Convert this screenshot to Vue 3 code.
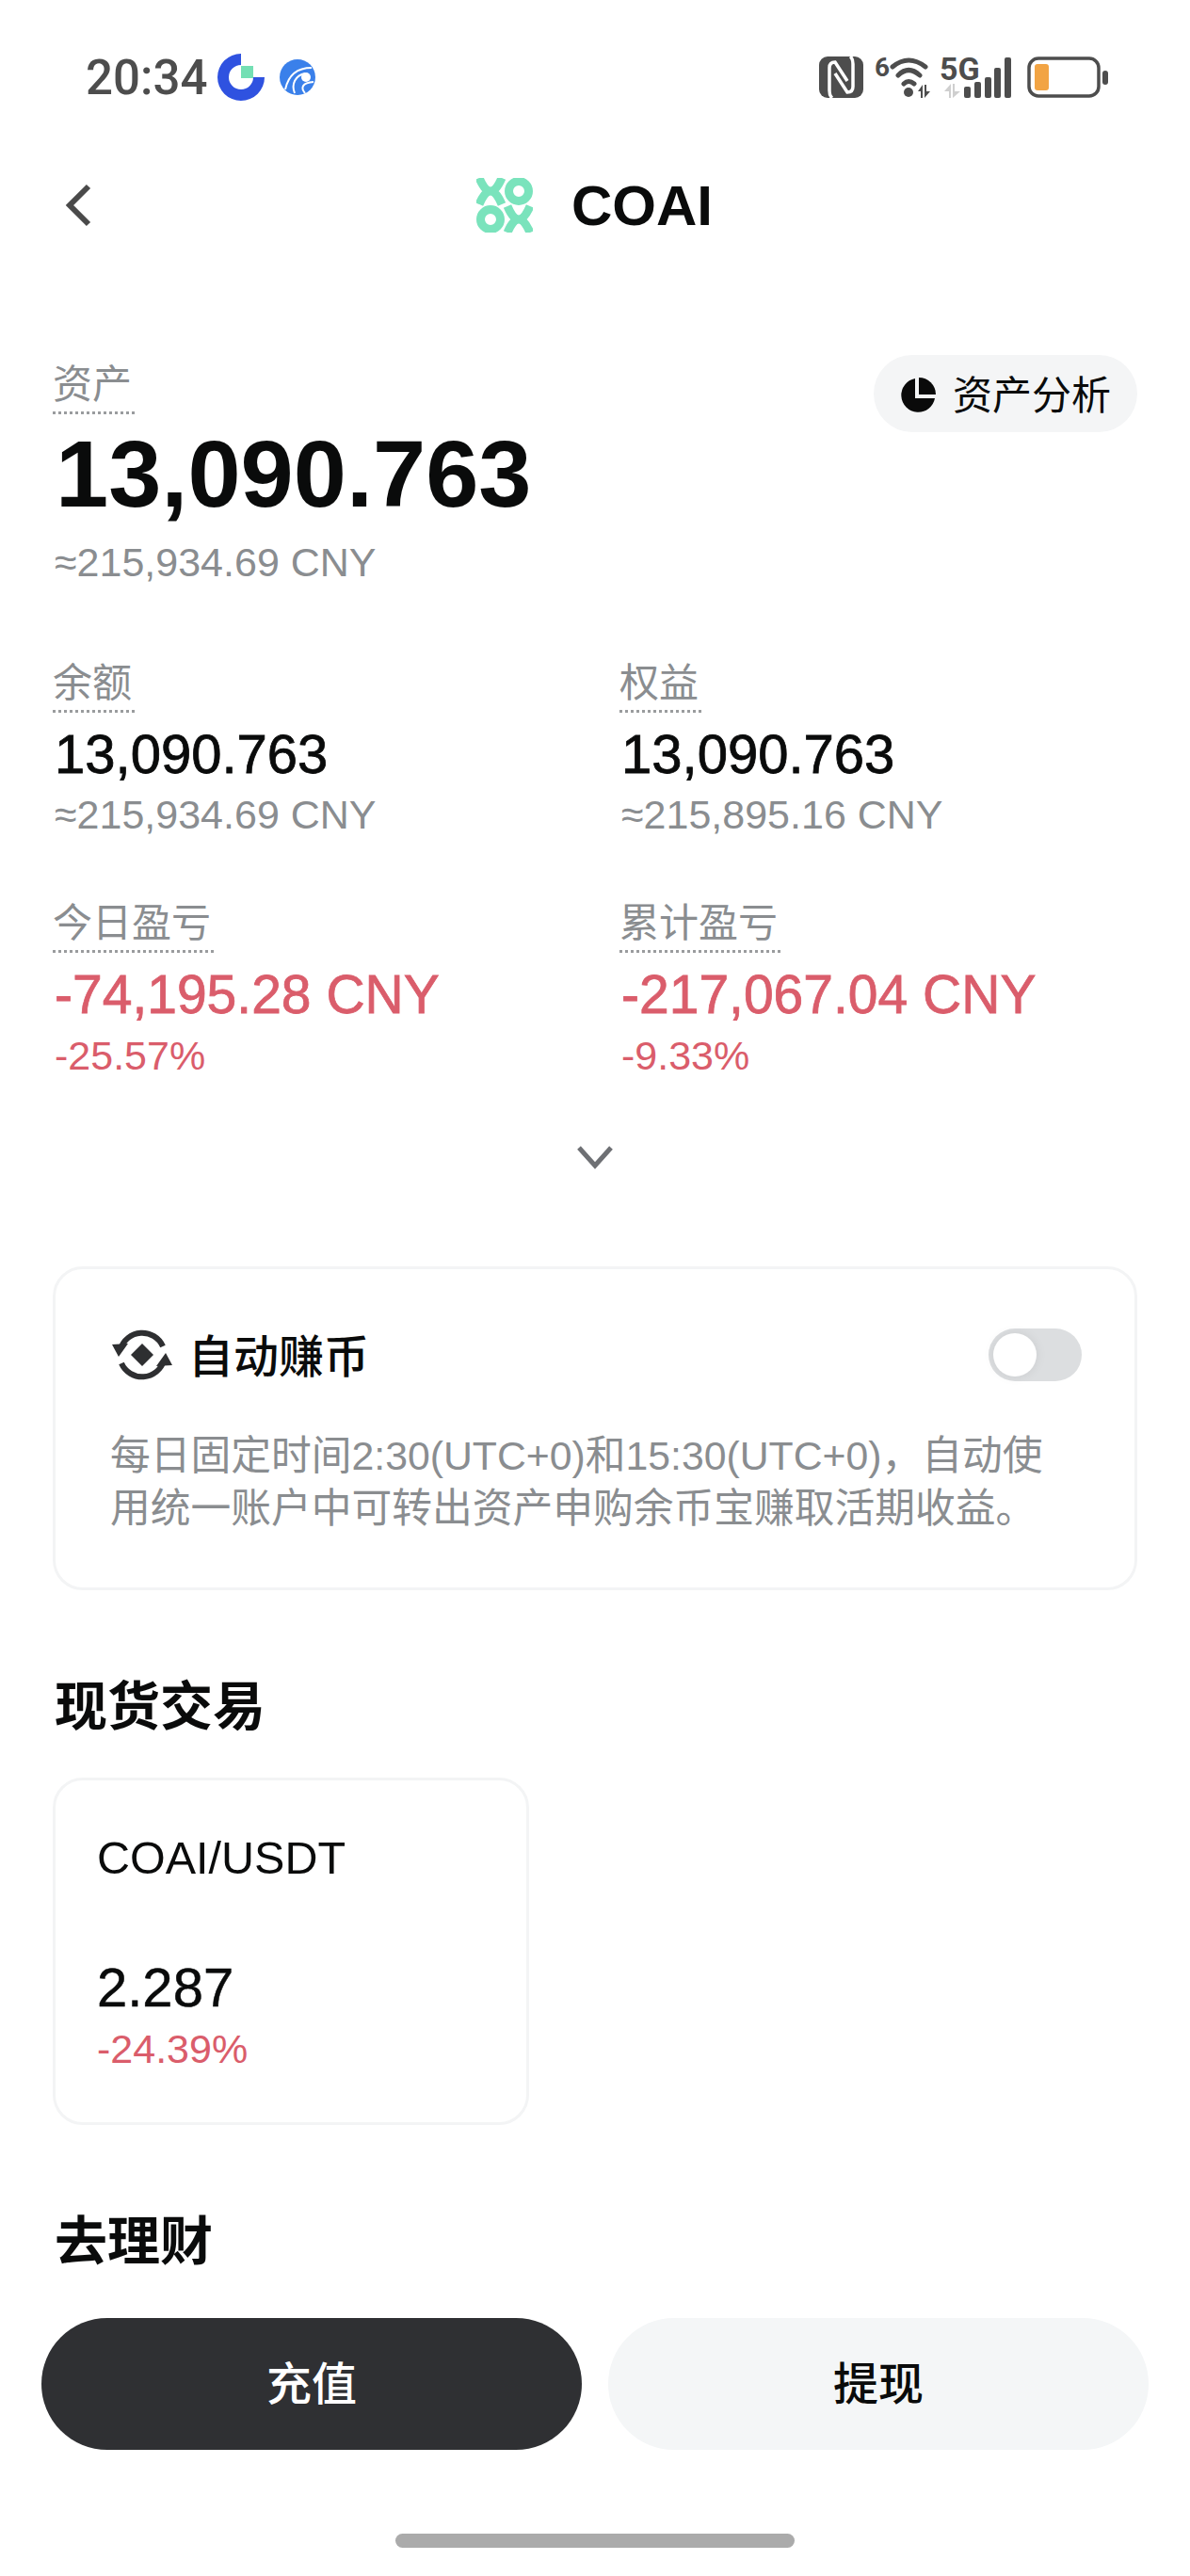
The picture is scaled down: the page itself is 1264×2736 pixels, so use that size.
<script setup>
const stats = [
  { label: '余额', value: '13,090.763', sub: '≈215,934.69 CNY' },
  { label: '权益', value: '13,090.763', sub: '≈215,895.16 CNY' },
  { label: '今日盈亏', value: '-74,195.28 CNY', sub: '-25.57%', loss: true },
  { label: '累计盈亏', value: '-217,067.04 CNY', sub: '-9.33%', loss: true }
];
</script>

<template>
  <div class="page">
    <div class="status">
      <div class="status-left">
        <span class="time">20:34</span>
        <svg class="app-a" width="50" height="50" viewBox="0 0 50 50">
          <path d="M25 0V12A13 13 0 1 0 38 25H50A25 25 0 1 1 25 0Z" fill="#2f52e0" />
          <rect x="25" y="13" width="13" height="13" fill="#74dfb4" />
        </svg>
        <svg class="app-b" width="38" height="38" viewBox="0 0 38 38">
          <circle cx="19" cy="19" r="19" fill="#3a80ea" />
          <path d="M6 32C9 18 18 9 34 9M16 36C12 26 17 17 27 15M27 36C22 30 24 25 36 24" fill="none" stroke="#fff" stroke-width="2" />
          <circle cx="28" cy="19" r="5" fill="#fff" />
        </svg>
      </div>
      <div class="status-right">
        <svg width="47" height="44" viewBox="0 0 47 44">
          <rect width="47" height="44" rx="9" fill="#4d4d4d" />
          <g fill="none" stroke="#fff" stroke-width="3.5">
            <path d="M14 44Q11 42 11 36V12Q11 6 17 6L30 26" />
            <path d="M33 0Q36 2 36 8V32Q36 38 30 38L17 18" />
          </g>
        </svg>
        <div class="wifi">
          <span class="tiny">6</span>
          <svg width="45" height="44" viewBox="0 0 45 44">
            <path d="M3 11Q20 -3 38 11M9 20Q20 9 32 20M15 29Q20 24 26 29" fill="none" stroke="#4d4d4d" stroke-width="5" stroke-linecap="round" />
            <circle cx="20" cy="38" r="5" fill="#4d4d4d" />
            <path d="M30 37L35 30V44H33V37ZM37 30H39V37H43L37 44Z" fill="#4d4d4d" />
          </svg>
        </div>
        <div class="signal">
          <span class="tiny five">5G</span>
          <svg width="74" height="44" viewBox="0 0 74 44">
            <path d="M1 37L8 29V44H6V37ZM10 29H12V37H18L10 44Z" fill="#cfcfcf" />
            <rect x="22" y="32" width="7" height="12" rx="2" fill="#4d4d4d" />
            <rect x="33" y="27" width="7" height="17" rx="2" fill="#4d4d4d" />
            <rect x="44" y="22" width="7" height="22" rx="2" fill="#4d4d4d" />
            <rect x="54" y="12" width="7" height="32" rx="2" fill="#4d4d4d" />
            <rect x="65" y="1" width="7" height="43" rx="2" fill="#4d4d4d" />
          </svg>
        </div>
        <svg width="87" height="44" viewBox="0 0 87 44">
          <rect x="2" y="2" width="74" height="40" rx="10" fill="none" stroke="#4d4d4d" stroke-width="3.5" />
          <rect x="8" y="8" width="15" height="28" rx="3" fill="#f2a444" />
          <rect x="80" y="15" width="6" height="15" rx="3" fill="#4d4d4d" />
        </svg>
      </div>
    </div>

    <div class="nav">
      <svg class="back" width="30" height="46" viewBox="0 0 30 46">
        <path d="M26 3L6 23L26 43" fill="none" stroke="#4a4a4a" stroke-width="6" />
      </svg>
      <div class="coin">
        <svg width="60" height="58" viewBox="0 0 60 58">
          <g fill="none" stroke="#7ae3bc" stroke-width="9">
            <circle cx="45" cy="14" r="10.5" />
            <circle cx="15" cy="44" r="10.5" />
            <path d="M3 0Q15 28 27 0M3 28Q15 0 27 28" />
            <path d="M33 30Q45 58 57 30M33 58Q45 30 57 58" />
          </g>
        </svg>
        <span class="coin-name">COAI</span>
      </div>
    </div>

    <div class="content">
      <div class="asset-head">
        <div>
          <span class="label">资产</span>
          <div class="asset-value">13,090.763</div>
          <div class="sub">≈215,934.69 CNY</div>
        </div>
        <div class="analysis">
          <svg class="pie" width="38" height="38" viewBox="0 0 38 38">
            <path d="M16 1A18 18 0 1 0 37 22H16Z" fill="#0a0a0a" />
            <path d="M20 0A18 18 0 0 1 38 18H20Z" fill="#0a0a0a" />
          </svg>
          <span class="analysis-text">资产分析</span>
        </div>
      </div>

      <div class="stats">
        <div v-for="item in stats" :key="item.label" class="stat">
          <span class="label">{{ item.label }}</span>
          <div :class="['stat-value', { loss: item.loss }]">{{ item.value }}</div>
          <div :class="['sub', { loss: item.loss }]">{{ item.sub }}</div>
        </div>
      </div>

      <div class="more">
        <svg width="38" height="26" viewBox="0 0 38 26">
          <path d="M2 3L19 22L36 3" fill="none" stroke="#6e7074" stroke-width="5" />
        </svg>
      </div>

      <div class="card earn">
        <div class="earn-head">
          <div class="earn-title">
            <svg width="64" height="62" viewBox="0 0 64 62">
              <g fill="none" stroke="#2e2f31" stroke-width="6">
                <path d="M9 25A24 24 0 0 1 54 22" />
                <path d="M55 37A24 24 0 0 1 10 40" />
              </g>
              <path d="M0 20L17 19L7 33Z" fill="#2e2f31" />
              <path d="M64 42L47 43L57 29Z" fill="#2e2f31" />
              <path d="M32 19L44 31L32 43L20 31Z" fill="#2e2f31" />
            </svg>
            <span class="earn-name">自动赚币</span>
          </div>
          <div class="toggle"><span class="knob"></span></div>
        </div>
        <p class="earn-desc">每日固定时间2:30(UTC+0)和15:30(UTC+0)，自动使<br />用统一账户中可转出资产申购余币宝赚取活期收益。</p>
      </div>

      <h2 class="section">现货交易</h2>
      <div class="card pair">
        <div class="pair-name">COAI/USDT</div>
        <div class="pair-price">2.287</div>
        <div class="sub loss">-24.39%</div>
      </div>
      <h2 class="section finance">去理财</h2>
    </div>

    <div class="actions">
      <button class="btn dark">充值</button>
      <button class="btn light">提现</button>
    </div>
    <div class="home"><span></span></div>
  </div>
</template>

<style>
body {
  background: #fff;
}
</style>

<style scoped>
.page {
  width: 1264px;
  height: 2736px;
  display: flex;
  flex-direction: column;
  overflow: hidden;
  background: #fff;
  color: #0a0b0b;
  font-family: "Liberation Sans", "Noto Sans CJK SC", sans-serif;
}

.status {
  height: 56px;
  margin-top: 54px;
  padding: 0 86px 0 91px;
  display: flex;
  justify-content: space-between;
  align-items: center;
}
.status-left,
.status-right {
  display: flex;
  align-items: center;
}
.time {
  font-family: Roboto, sans-serif;
  font-size: 51px;
  font-weight: 500;
  color: #4d4d4d;
}
.app-a {
  margin-left: 11px;
}
.app-b {
  margin-left: 16px;
}
.status-right {
  gap: 12px;
}
.wifi,
.signal {
  display: flex;
  align-items: flex-start;
  height: 44px;
}
.signal {
  position: relative;
  margin-right: 3px;
}
.tiny {
  font-family: "Liberation Sans Narrow", Roboto, sans-serif;
  font-size: 28px;
  font-weight: 700;
  line-height: 24px;
  color: #4d4d4d;
}
.five {
  position: absolute;
  left: -4px;
  top: -1px;
  font-size: 34px;
  line-height: 28px;
}

.nav {
  height: 60px;
  margin-top: 78px;
  display: flex;
  align-items: center;
  padding-left: 68px;
}
.coin {
  margin-left: 408px;
  display: flex;
  align-items: center;
  gap: 41px;
}
.coin-name {
  font-size: 60px;
  font-weight: 700;
}

.content {
  flex: 1;
  min-height: 0;
  padding: 0 56px;
}
.asset-head {
  margin-top: 133px;
  display: flex;
  justify-content: space-between;
  align-items: flex-start;
}
.label {
  display: inline-block;
  padding-right: 3px;
  font-size: 42px;
  line-height: 56px;
  color: #8a8d90;
  border-bottom: 3px dotted #9a9c9e;
}
.asset-value {
  margin-top: 5px;
  margin-left: 3px;
  font-size: 101px;
  line-height: 116px;
  font-weight: 700;
}
.sub {
  font-size: 43px;
  line-height: 50px;
  color: #8a8d90;
  margin-top: 11px;
  margin-left: 2px;
}
.analysis {
  margin-top: -4px;
  height: 82px;
  padding: 0 28px;
  display: flex;
  align-items: center;
  gap: 18px;
  font-size: 42px;
  background: #f4f5f6;
  border-radius: 41px;
}
.pie {
  margin-top: 4px;
}
.analysis-text {
  margin-top: -3px;
}

.stats {
  margin-top: 76px;
  display: grid;
  grid-template-columns: 602px 1fr;
  row-gap: 63px;
}
.stat-value {
  margin-top: 11px;
  margin-left: 2px;
  font-size: 58px;
  line-height: 66px;
  -webkit-text-stroke: 0.8px currentColor;
}
.stat-value.loss {
  font-size: 57px;
}
.stat .sub {
  margin-top: 6px;
}
.stat .sub.loss {
  margin-top: 7px;
}
.loss {
  color: #da5d6b;
}

.more {
  margin-top: 70px;
  display: flex;
  justify-content: center;
}

.card {
  border: 3px solid #f3f4f5;
  border-radius: 32px;
}
.earn {
  margin-top: 103px;
  height: 344px;
  box-sizing: border-box;
  padding: 57px 56px 0 60px;
}
.earn-head {
  display: flex;
  justify-content: space-between;
  align-items: center;
}
.earn-title {
  display: flex;
  align-items: center;
  gap: 17px;
  font-size: 48px;
  font-weight: 500;
}
.earn-name {
  margin-top: -3px;
}
.toggle {
  width: 99px;
  height: 56px;
  box-sizing: border-box;
  padding: 5px;
  background: #dcdee0;
  border-radius: 28px;
}
.knob {
  display: block;
  width: 46px;
  height: 46px;
  background: #fff;
  border-radius: 50%;
  box-shadow: 0 0 12px rgba(0, 0, 0, 0.08);
}
.earn-desc {
  margin: 46px 0 0 -2px;
  font-size: 42.75px;
  line-height: 56px;
  color: #8a8d90;
  white-space: nowrap;
}

.section {
  margin: 89px 0 0 2px;
  font-size: 56px;
  line-height: 70px;
  font-weight: 700;
}
.pair {
  margin-top: 40px;
  width: 506px;
  height: 369px;
  box-sizing: border-box;
  padding: 54px 44px 0;
}
.pair-name {
  font-size: 48.5px;
  line-height: 56px;
}
.pair-price {
  margin-top: 77px;
  font-size: 58px;
  line-height: 66px;
  -webkit-text-stroke: 0.5px currentColor;
}
.pair .sub {
  margin: 7px 0 0;
}
.finance {
  margin-top: 89px;
}

.actions {
  display: flex;
  gap: 28px;
  padding: 0 44px;
}
.btn {
  flex: 1;
  height: 140px;
  padding: 0 0 8px;
  border: 0;
  border-radius: 70px;
  font-family: inherit;
  font-size: 48px;
  font-weight: 500;
}
.dark {
  background: #2f3033;
  color: #fff;
}
.light {
  background: #f4f6f7;
  color: #0a0b0b;
}
.home {
  height: 134px;
  box-sizing: border-box;
  padding-top: 89px;
  display: flex;
  justify-content: center;
}
.home span {
  width: 424px;
  height: 15px;
  background: #ababab;
  border-radius: 8px;
}
</style>
